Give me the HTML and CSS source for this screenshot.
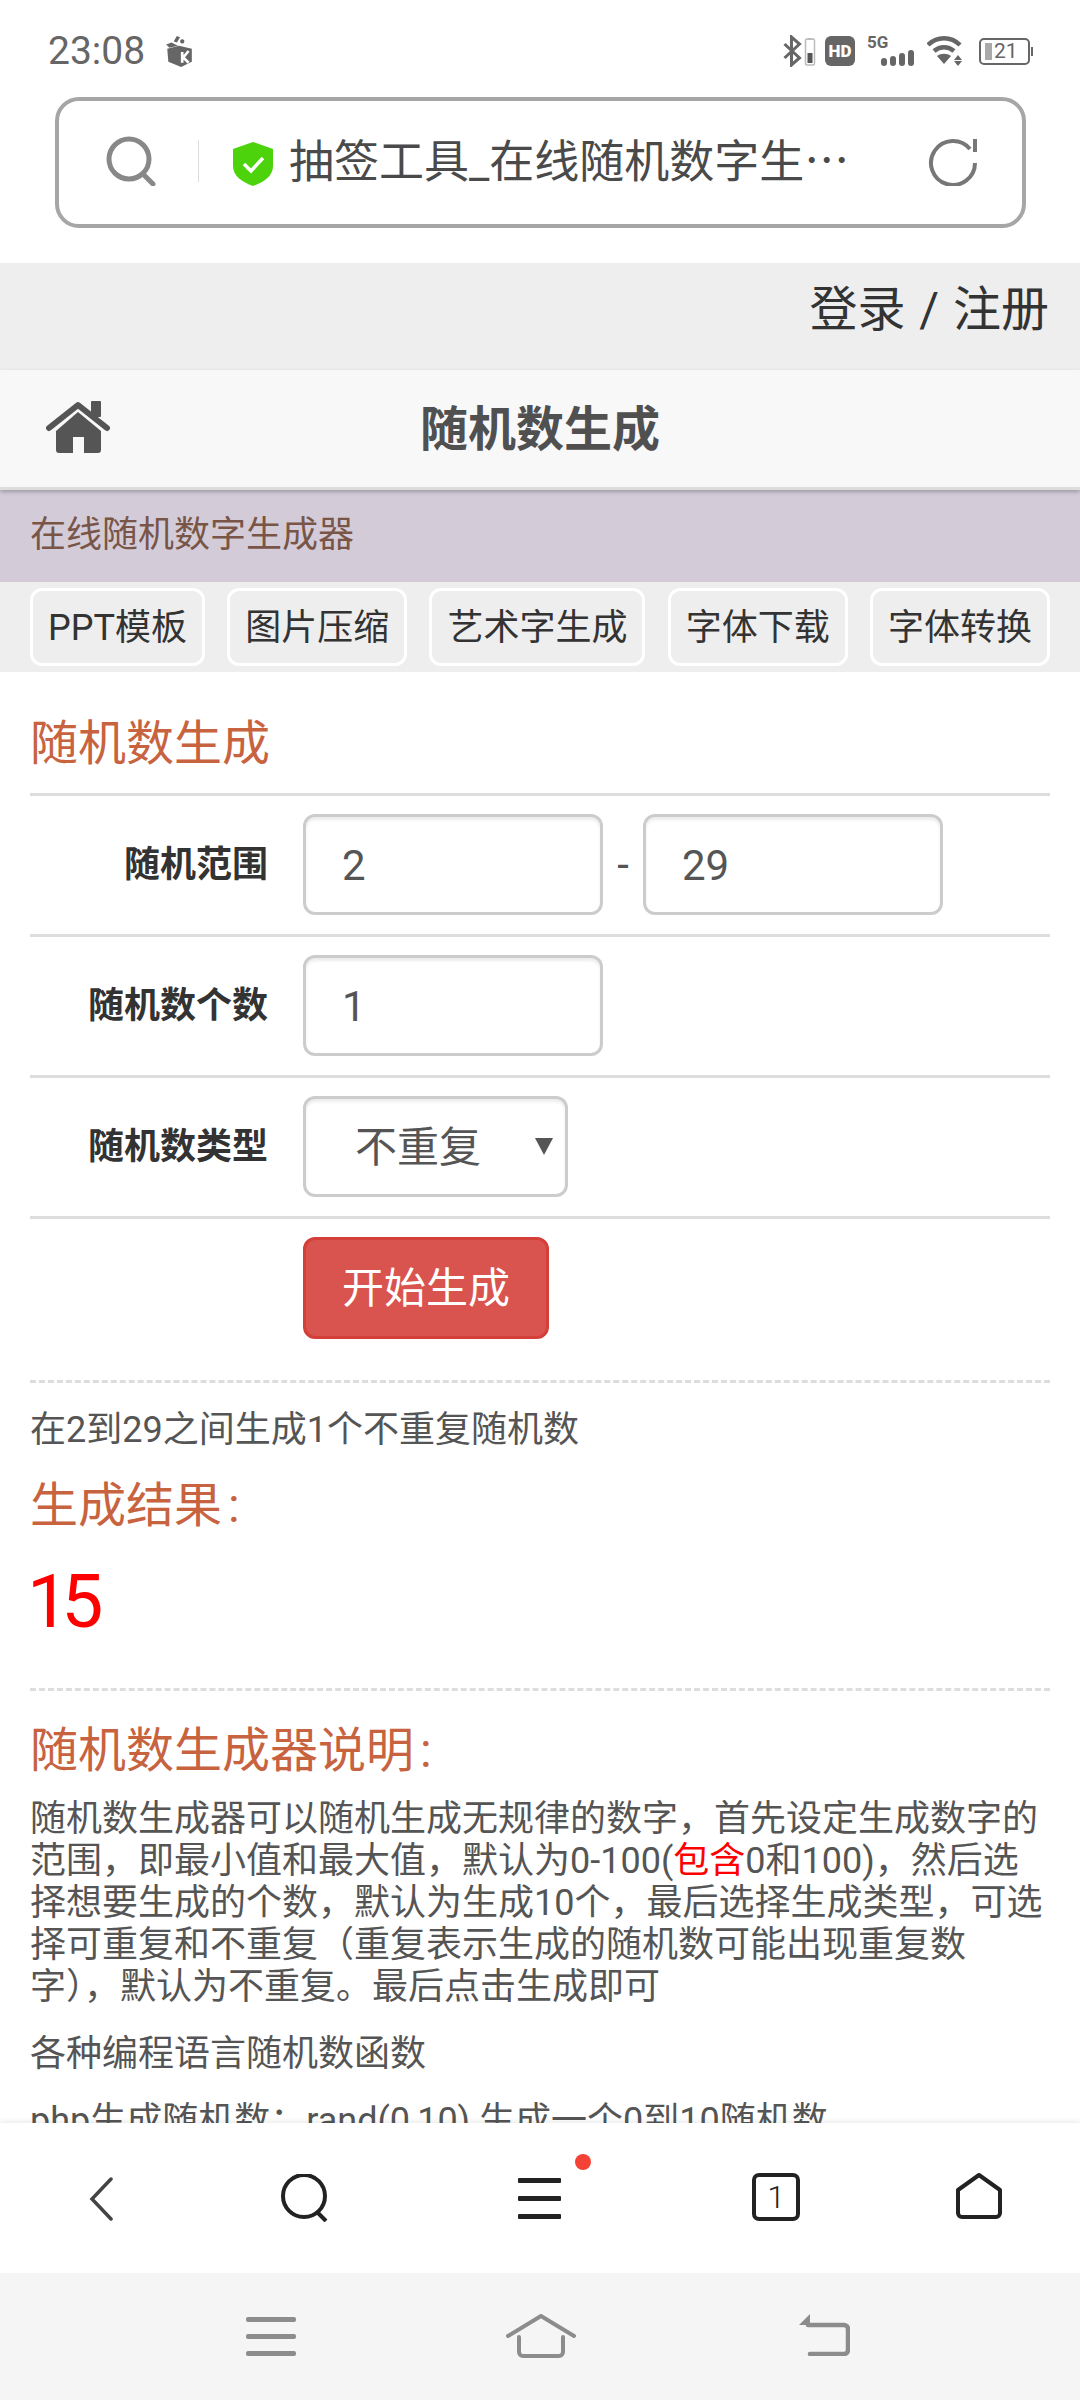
FILE: index.html
```html
<!DOCTYPE html>
<html lang="zh-CN">
<head>
  <meta charset="UTF-8">
  <title>随机数生成</title>
  <link rel="stylesheet" href="styles.css">
</head>
<body>
  <div class="phone">
    <!-- status bar -->
    <div class="status">
      <span class="time">23:08</span>
      <svg class="notify" width="30" height="32" viewBox="0 0 28 30">
        <path d="M3 13l11-3 12 3v12l-10 5-12-5z" fill="#666"/>
        <path d="M5 12l-3-3 5-2 6 3zM9 6l3-5 3 1-3 5zM17 4a2 2 0 1 0 .1 0z" fill="#666"/>
        <path d="M17 16v10M23 15l-5 6 5 5" stroke="#fff" stroke-width="2.5" fill="none"/>
      </svg>
      <div class="status-right">
        <svg width="19" height="32" viewBox="0 0 18 32"><path d="M1 9l15 14-8 7V2l8 7L1 23" fill="none" stroke="#666" stroke-width="3"/></svg>
        <svg class="charge" width="12" height="30" viewBox="0 0 11 30"><rect x="1" y="3" width="9" height="26" rx="1.5" fill="none" stroke="#bbb" stroke-width="1.5"/><rect x="3" y="2" width="5" height="2" fill="#bbb"/><rect x="3" y="17" width="5" height="10" fill="#555"/></svg>
        <span class="hd">HD</span>
        <div class="signal">
          <span class="five-g">5G</span>
          <div class="bars"><i class="b1"></i><i class="b2"></i><i class="b3"></i><i class="b4"></i></div>
        </div>
        <svg class="wifi" width="36" height="30" viewBox="0 0 36 30">
          <path d="M1 9c9-9 23-9 32 0M7 15c6-5 14-5 20 0" fill="none" stroke="#666" stroke-width="4.5"/>
          <path d="M17 28l-7-8c4-3 10-3 14 0z" fill="#666"/>
          <path d="M31 19l4 5h-8zM27 25h8l-4 5z" fill="#666"/>
        </svg>
        <div class="battery"><i></i><span>21</span></div>
      </div>
    </div>

    <!-- browser url bar -->
    <div class="urlbar">
      <svg class="url-search" width="50" height="50" viewBox="0 0 50 50"><circle cx="23" cy="23" r="20" fill="none" stroke="#888" stroke-width="5"/><path d="M37 38l10 10" stroke="#888" stroke-width="5" stroke-linecap="round"/></svg>
      <span class="url-sep"></span>
      <svg class="shield" width="42" height="44" viewBox="0 0 42 44"><path d="M21 0l20 7v17c0 10-9 16-20 20C10 40 1 34 1 24V7z" fill="#4cd30c"/><path d="M12 22l7 7 12-13" fill="none" stroke="#fff" stroke-width="3.5"/></svg>
      <span class="url-text">抽签工具_在线随机数字生<span class="ell">…</span></span>
      <svg class="url-reload" width="50" height="50" viewBox="0 0 50 50"><path d="M42 13A22 22 0 1 0 47 27" fill="none" stroke="#777" stroke-width="4"/><path d="M47 3v13" stroke="#777" stroke-width="4"/></svg>
    </div>

    <main class="page">
      <div class="topbar"><a class="login">登录 / 注册</a></div>

      <header class="titlebar">
        <svg class="home" width="64" height="52" viewBox="0 0 64 52">
          <path d="M3 27L32 4l29 23" fill="none" stroke="#555" stroke-width="6" stroke-linecap="round" stroke-linejoin="round"/>
          <rect x="45" y="0" width="10" height="16" rx="1" fill="#555"/>
          <path d="M32 11l23 19v19a3 3 0 0 1-3 3H38V36H27v16H13a3 3 0 0 1-3-3V30z" fill="#555"/>
        </svg>
        <h1>随机数生成</h1>
      </header>

      <div class="subbar">在线随机数字生成器</div>

      <nav class="links">
        <a>PPT模板</a>
        <a>图片压缩</a>
        <a>艺术字生成</a>
        <a>字体下载</a>
        <a>字体转换</a>
      </nav>

      <section class="content">
        <h2 class="form-title">随机数生成</h2>

        <div class="row">
          <label>随机范围</label>
          <input class="num" type="text" value="2">
          <span class="dash">-</span>
          <input class="num" type="text" value="29">
        </div>
        <div class="row">
          <label>随机数个数</label>
          <input class="num" type="text" value="1">
        </div>
        <div class="row">
          <label>随机数类型</label>
          <div class="select">不重复</div>
        </div>
        <div class="row">
          <label></label>
          <button class="go">开始生成</button>
        </div>

        <div class="result">
          <p class="hint">在2到29之间生成1个不重复随机数</p>
          <h2>生成结果<span class="colon">:</span></h2>
          <div class="number">15</div>
        </div>

        <div class="about">
          <h2>随机数生成器说明<span class="colon">:</span></h2>
          <p>随机数生成器可以随机生成无规律的数字，首先设定生成数字的范围，即最小值和最大值，默认为0-100(<span class="red">包含</span>0和100)，然后选择想要生成的个数，默认为生成10个，最后选择生成类型，可选择可重复和不重复（重复表示生成的随机数可能出现重复数字），默认为不重复。最后点击生成即可</p>
          <p>各种编程语言随机数函数</p>
          <p>php生成随机数：rand(0,10) 生成一个0到10随机数</p>
        </div>
      </section>
    </main>

    <!-- browser toolbar -->
    <div class="toolbar">
      <svg width="24" height="44" viewBox="0 0 24 44"><path d="M22 2L3 22l19 20" fill="none" stroke="#444" stroke-width="3.5" stroke-linecap="round"/></svg>
      <svg width="48" height="48" viewBox="0 0 48 48"><circle cx="23" cy="22" r="21" fill="none" stroke="#222" stroke-width="4"/><path d="M36 38l9 9" stroke="#222" stroke-width="4"/></svg>
      <div class="menu"><i></i><i></i><i></i><b class="dot"></b></div>
      <div class="tabs">1</div>
      <svg width="48" height="48" viewBox="0 0 48 48"><path d="M24 3l21 15v23a4 4 0 0 1-4 4H7a4 4 0 0 1-4-4V18z" fill="none" stroke="#222" stroke-width="4" stroke-linejoin="round"/></svg>
    </div>

    <!-- android nav bar -->
    <div class="navbar">
      <div class="nav-lines"><i></i><i></i><i></i></div>
      <svg width="70" height="44" viewBox="0 0 70 44"><path d="M2 22L35 2l33 20" fill="none" stroke="#8c8c8c" stroke-width="4" stroke-linecap="round" stroke-linejoin="round"/><path d="M13 23v15a4 4 0 0 0 4 4h36a4 4 0 0 0 4-4V23" fill="none" stroke="#8c8c8c" stroke-width="4" stroke-linecap="round"/></svg>
      <svg width="52" height="42" viewBox="0 0 52 42"><path d="M12 40h34a4 4 0 0 0 4-4V15a4 4 0 0 0-4-4H10" fill="none" stroke="#8c8c8c" stroke-width="4.5" stroke-linecap="round"/><path d="M12 0L1 11h11z" fill="#8c8c8c"/></svg>
    </div>
  </div>
</body>
</html>
```

FILE: styles.css
```css
* {
  box-sizing: border-box;
}

body {
  margin: 0;
  font-family: Roboto, "Noto Sans CJK SC", sans-serif;
  background: #fff;
}

.phone {
  width: 1080px;
  height: 2400px;
  display: flex;
  flex-direction: column;
  overflow: hidden;
}

/* status bar */
.status {
  height: 97px;
  flex: none;
  display: flex;
  align-items: center;
  padding: 5px 47px 0 48px;
  color: #666;
}

.time {
  font-size: 39px;
}

.notify {
  margin-left: 19px;
}

.status-right {
  margin-left: auto;
  display: flex;
  align-items: center;
}

.charge {
  margin-left: 2px;
}

.hd {
  width: 30px;
  height: 30px;
  margin-left: 9px;
  background: #666;
  border-radius: 6px;
  color: #fff;
  font-size: 17px;
  font-weight: 900;
  line-height: 30px;
  text-align: center;
}

.signal {
  width: 47px;
  height: 30px;
  margin-left: 12px;
  position: relative;
}

.five-g {
  position: absolute;
  left: 0;
  top: -4px;
  font-size: 17px;
  font-weight: 700;
  color: #666;
}

.bars {
  position: absolute;
  right: 0;
  bottom: 0;
  display: flex;
  align-items: flex-end;
  gap: 3px;
}

.bars i {
  width: 6px;
  background: #666;
  border-radius: 3px;
}

.b1 { height: 8px; }
.b2 { height: 10px; }
.b3 { height: 13px; }
.b4 { height: 16px; }

.wifi {
  margin-left: 13px;
}

.battery {
  width: 51px;
  height: 27px;
  margin-left: 16px;
  margin-right: 3px;
  border: 2px solid #666;
  border-radius: 5px;
  display: flex;
  align-items: center;
  padding-left: 4px;
  position: relative;
  color: #666;
  font-size: 21px;
}

.battery i {
  width: 7px;
  height: 17px;
  background: #aaa;
  margin-right: 2px;
}

.battery::after {
  content: "";
  position: absolute;
  right: -5px;
  top: 7px;
  width: 2px;
  height: 9px;
  background: #666;
}

/* url bar */
.urlbar {
  flex: none;
  width: 971px;
  height: 131px;
  margin: 0 0 35px 55px;
  border: 4px solid #a6a6a6;
  border-radius: 24px;
  display: flex;
  align-items: center;
  padding-left: 47px;
}

.url-search,
.url-reload {
  margin-bottom: 4px;
}

.url-sep {
  width: 1px;
  height: 42px;
  margin-left: 42px;
  margin-bottom: 4px;
  background: #ddd;
}

.shield {
  margin-left: 33px;
  margin-top: 2px;
}

.url-text {
  margin-left: 15px;
  margin-bottom: 8px;
  font-size: 45px;
  color: #4a4a4a;
  white-space: nowrap;
}

.ell {
  font-family: "Noto Sans CJK JP", sans-serif;
}

.url-reload {
  margin-left: auto;
  margin-right: 44px;
}

/* page */
.page {
  flex: 1;
  min-height: 0;
  overflow: hidden;
  color: #555;
}

.topbar {
  height: 107px;
  background: #eee;
  display: flex;
  align-items: center;
  justify-content: flex-end;
  padding: 0 31px 24px 0;
}

.login {
  font-size: 48px;
  color: #333;
  word-spacing: 2px;
}

.titlebar {
  height: 120px;
  padding-bottom: 8px;
  background: #f8f8f8;
  border-bottom: 3px solid #ddd;
  box-shadow: 0 2px 4px rgba(0, 0, 0, 0.25);
  position: relative;
  display: flex;
  align-items: center;
  justify-content: center;
}

.home {
  position: absolute;
  left: 46px;
  top: 31px;
}

.titlebar h1 {
  margin: 0;
  font-size: 48px;
  font-weight: 700;
  color: #505050;
}

.subbar {
  height: 92px;
  background: #d3ccd8;
  color: #795548;
  font-size: 36px;
  line-height: 90px;
  padding-left: 30px;
}

.links {
  height: 90px;
  background: #eee;
  padding: 6px 30px;
  display: flex;
  justify-content: space-between;
}

.links a {
  height: 78px;
  padding: 0 15px;
  border: 3px solid #fff;
  border-radius: 12px;
  font-size: 36px;
  line-height: 75px;
  color: #333;
}

.content {
  padding: 0 30px;
}

.content h2 {
  margin: 0;
  font-size: 48px;
  font-weight: 400;
  color: #c7633f;
}

.colon {
  margin-left: 6px;
}

.form-title {
  height: 121px;
  line-height: 144px;
}

.row {
  height: 141px;
  border-top: 3px solid #ddd;
  padding-top: 18px;
  display: flex;
  align-items: flex-start;
}

.row label {
  width: 238px;
  flex: none;
  padding-top: 21px;
  text-align: right;
  font-size: 36px;
  font-weight: 700;
  color: #333;
}

.num {
  width: 300px;
  height: 101px;
  margin-left: 35px;
  padding: 2px 36px 0;
  border: 3px solid #ccc;
  border-radius: 12px;
  box-shadow: inset 0 3px 3px rgba(0, 0, 0, 0.075);
  font-family: inherit;
  font-size: 42px;
  color: #555;
}

.dash {
  width: 40px;
  margin-right: -35px;
  text-align: center;
  font-size: 42px;
  line-height: 101px;
  color: #555;
}

.select {
  width: 265px;
  height: 101px;
  margin-left: 35px;
  padding-left: 49px;
  border: 3px solid #ccc;
  border-radius: 12px;
  box-shadow: inset 0 3px 3px rgba(0, 0, 0, 0.075);
  font-size: 42px;
  line-height: 98px;
  color: #555;
  position: relative;
}

.select::after {
  content: "";
  position: absolute;
  right: 12px;
  top: 39px;
  border-left: 9px solid transparent;
  border-right: 9px solid transparent;
  border-top: 17px solid #555;
}

.go {
  width: 246px;
  height: 102px;
  margin-left: 35px;
  padding: 0 0 8px;
  border: 3px solid #d43f3a;
  border-radius: 12px;
  background: #d9534f;
  color: #fff;
  font-family: inherit;
  font-size: 42px;
}

.result {
  margin-top: 23px;
  border-top: 3px dashed #ddd;
  height: 308px;
}

.hint {
  margin: 0;
  padding-top: 26px;
  font-size: 36px;
  line-height: 42px;
}

.result h2 {
  margin-top: 23px;
  line-height: 64px;
}

.number {
  margin: 21px 0 0 -3px;
  font-size: 75px;
  letter-spacing: -8px;
  line-height: 84px;
  color: #f00;
}

.about {
  border-top: 3px dashed #ddd;
}

.about h2 {
  margin: 35px 0 22px;
  line-height: 50px;
}

.about p {
  margin: 0 0 25px;
  font-size: 36px;
  line-height: 42px;
}

.red {
  color: #f00;
}

/* browser toolbar */
.toolbar {
  flex: none;
  height: 150px;
  background: #fff;
  position: relative;
  box-shadow: 0 -2px 5px rgba(0, 0, 0, 0.08);
}

.toolbar > * {
  position: absolute;
}

.toolbar > svg:nth-of-type(1) { left: 89px; top: 54px; }
.toolbar > svg:nth-of-type(2) { left: 281px; top: 51px; }
.toolbar > svg:nth-of-type(3) { left: 955px; top: 49px; }

.menu {
  left: 518px;
  top: 55px;
  width: 43px;
}

.menu i {
  display: block;
  height: 5px;
  margin-bottom: 13px;
  background: #222;
  border-radius: 1px;
}

.dot {
  position: absolute;
  left: 57px;
  top: -24px;
  width: 16px;
  height: 16px;
  border-radius: 50%;
  background: #f44336;
}

.tabs {
  left: 752px;
  top: 50px;
  width: 48px;
  height: 48px;
  border: 4px solid #222;
  border-radius: 7px;
  font-size: 32px;
  font-weight: 300;
  line-height: 40px;
  text-align: center;
  color: #222;
}

/* android nav bar */
.navbar {
  flex: none;
  height: 127px;
  background: #f5f5f5;
  position: relative;
}

.navbar > * {
  position: absolute;
}

.navbar > svg:nth-of-type(1) { left: 506px; top: 41px; }
.navbar > svg:nth-of-type(2) { left: 798px; top: 41px; }

.nav-lines {
  left: 246px;
  top: 44px;
  width: 50px;
}

.nav-lines i {
  display: block;
  height: 5px;
  margin-bottom: 12px;
  background: #8c8c8c;
  border-radius: 2px;
}
```
